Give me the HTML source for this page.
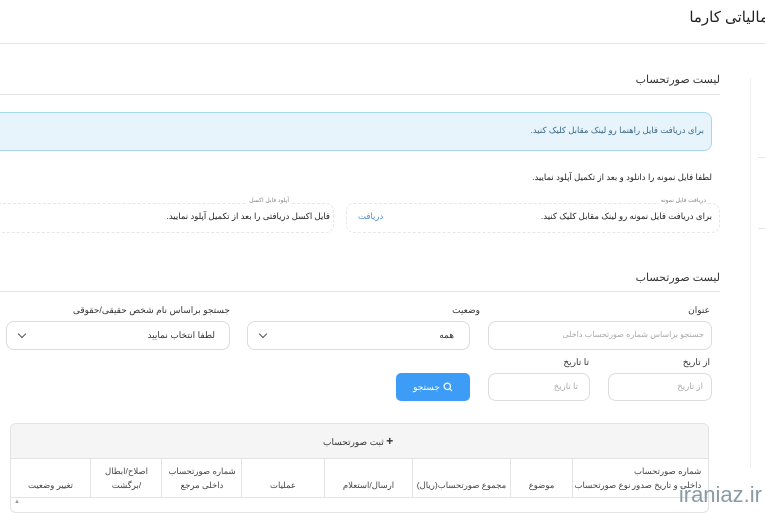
<html><head><style>
body{margin:0;width:765px;height:510px;overflow:hidden;background:#fff;font-family:"Liberation Sans","Noto Sans CJK SC",sans-serif;color:#333;position:relative}
.a{position:absolute}
.t{position:absolute;direction:rtl;white-space:nowrap}
.box{position:absolute;border:1px solid #dcdcdc;border-radius:8px;background:#fff;box-sizing:border-box}
.chev{position:absolute;left:12px;top:9px;width:5px;height:5px;border-right:1px solid #555;border-bottom:1px solid #555;transform:rotate(45deg)}
.th{position:absolute;top:458px;height:39px;border-left:1px solid #e3e3e3;font-size:8.5px;color:#444;direction:rtl;text-align:center;display:flex;align-items:center;justify-content:center;line-height:14px;white-space:nowrap}
</style></head><body>
<div class="t" style="right:-3px;top:8px;font-size:15px;color:#222">مالیاتی کارما</div>
<div class="a" style="left:0;top:43px;width:765px;height:1px;background:#e6e6e6"></div>
<div class="a" style="left:750px;top:78px;width:1px;height:390px;background:#eee"></div>
<div class="a" style="left:758px;top:157px;width:7px;height:1px;background:#e6e6e6"></div>
<div class="a" style="left:758px;top:228px;width:7px;height:1px;background:#e6e6e6"></div>

<div class="t" style="right:45px;top:73px;font-size:11px">لیست صورتحساب</div>
<div class="a" style="left:0;top:94px;width:720px;height:1px;background:#e3e3e3"></div>
<div class="a" style="left:-10px;top:112px;width:722px;height:39px;background:#e7f4fb;border:1px solid #a8d7ee;border-radius:8px;box-sizing:border-box"></div>
<div class="t" style="right:61px;top:125px;font-size:8.5px;color:#3a6787">برای دریافت فایل راهنما رو لینک مقابل کلیک کنید.</div>
<div class="t" style="right:53px;top:172px;font-size:8.5px;color:#222">لطفا فایل نمونه را دانلود و بعد از تکمیل آپلود نمایید.</div>

<div class="box" style="left:346px;top:203px;width:374px;height:30px;border-style:dashed;border-color:#e6e6e6"></div>
<div class="t" style="right:57px;top:197px;font-size:6px;color:#888;background:#fff;padding:0 2px">دریافت فایل نمونه</div>
<div class="t" style="right:53px;top:211px;font-size:8.5px;color:#222">برای دریافت فایل نمونه رو لینک مقابل کلیک کنید.</div>
<div class="t" style="left:358px;top:211px;font-size:8.5px;color:#4a90d0">دریافت</div>
<div class="box" style="left:-10px;top:203px;width:344px;height:30px;border-style:dashed;border-color:#e6e6e6"></div>
<div class="t" style="right:474px;top:197px;font-size:6px;color:#888;background:#fff;padding:0 2px">آپلود فایل اکسل</div>
<div class="t" style="right:435px;top:211px;font-size:8.5px;color:#222">فایل اکسل دریافتی را بعد از تکمیل آپلود نمایید.</div>

<div class="t" style="right:45px;top:271px;font-size:11px">لیست صورتحساب</div>
<div class="a" style="left:0;top:291px;width:720px;height:1px;background:#e3e3e3"></div>

<div class="t" style="right:55px;top:305px;font-size:9px">عنوان</div>
<div class="t" style="right:285px;top:305px;font-size:9px">وضعیت</div>
<div class="t" style="right:535px;top:305px;font-size:9px">جستجو براساس نام شخص حقیقی/حقوقی</div>
<div class="box" style="left:488px;top:321px;width:224px;height:29px"></div>
<div class="t" style="right:61px;top:330px;font-size:8px;color:#aaa">جستجو براساس شماره صورتحساب داخلی</div>
<div class="box" style="left:247px;top:321px;width:223px;height:29px"><div class="chev"></div></div>
<div class="t" style="right:311px;top:330px;font-size:9px">همه</div>
<div class="box" style="left:6px;top:321px;width:224px;height:29px"><div class="chev"></div></div>
<div class="t" style="right:550px;top:330px;font-size:9px">لطفا انتخاب نمایید</div>

<div class="t" style="right:55px;top:357px;font-size:9px">از تاریخ</div>
<div class="t" style="right:176px;top:357px;font-size:9px">تا تاریخ</div>
<div class="box" style="left:608px;top:373px;width:104px;height:28px"></div>
<div class="t" style="right:62px;top:381px;font-size:8.5px;color:#aaa">از تاریخ</div>
<div class="box" style="left:488px;top:373px;width:102px;height:28px"></div>
<div class="t" style="right:187px;top:381px;font-size:8.5px;color:#aaa">تا تاریخ</div>
<div class="a" style="left:396px;top:373px;width:74px;height:28px;background:#3d9cf6;border-radius:5px;color:#fff;font-size:9px;display:flex;align-items:center;justify-content:center;direction:rtl">
<svg width="10" height="10" viewBox="0 0 10 10" style="margin-left:3px"><circle cx="4.3" cy="4.3" r="3.2" fill="none" stroke="#fff" stroke-width="1.2"/><path d="M6.7 6.7L9 9" stroke="#fff" stroke-width="1.2"/></svg>جستجو</div>

<div class="a" style="left:10px;top:423px;width:699px;height:90px;border:1px solid #e3e3e3;border-radius:6px;box-sizing:border-box"></div>
<div class="a" style="left:11px;top:424px;width:697px;height:34px;background:#f5f5f5;border-bottom:1px solid #e3e3e3;border-radius:6px 6px 0 0"></div>
<div class="t" style="left:323px;top:434px;font-size:9px;color:#333"><b style="font-size:12px">+</b> ثبت صورتحساب</div>
<div class="th" style="left:632px;width:76px;border-left:0;justify-content:flex-end;padding-right:10px;box-sizing:border-box;text-align:right">شماره صورتحساب<br>داخلی و تاریخ صدور</div>
<div class="th" style="left:572px;width:60px;border-left:1px solid #e3e3e3;padding-top:14px;box-sizing:border-box">نوع صورتحساب</div>
<div class="th" style="left:510px;width:62px;padding-top:14px;box-sizing:border-box">موضوع</div>
<div class="th" style="left:412px;width:98px;padding-top:14px;box-sizing:border-box">مجموع صورتحساب(ریال)</div>
<div class="th" style="left:324px;width:88px;padding-top:14px;box-sizing:border-box">ارسال/استعلام</div>
<div class="th" style="left:241px;width:83px;padding-top:14px;box-sizing:border-box">عملیات</div>
<div class="th" style="left:161px;width:80px">شماره صورتحساب<br>داخلی مرجع</div>
<div class="th" style="left:90px;width:71px">اصلاح/ابطال<br>/برگشت</div>
<div class="th" style="left:11px;width:79px;border-left:0;padding-top:14px;box-sizing:border-box">تغییر وضعیت</div>
<div class="a" style="left:11px;top:497px;width:697px;height:1px;background:#e3e3e3"></div>
<div class="t" style="left:14px;top:499px;font-size:6px;color:#999">▲</div>
<div class="t" style="right:3px;top:482px;font-size:22px;color:#8a9aa6;direction:ltr">iraniaz.ir</div>
</body></html>
